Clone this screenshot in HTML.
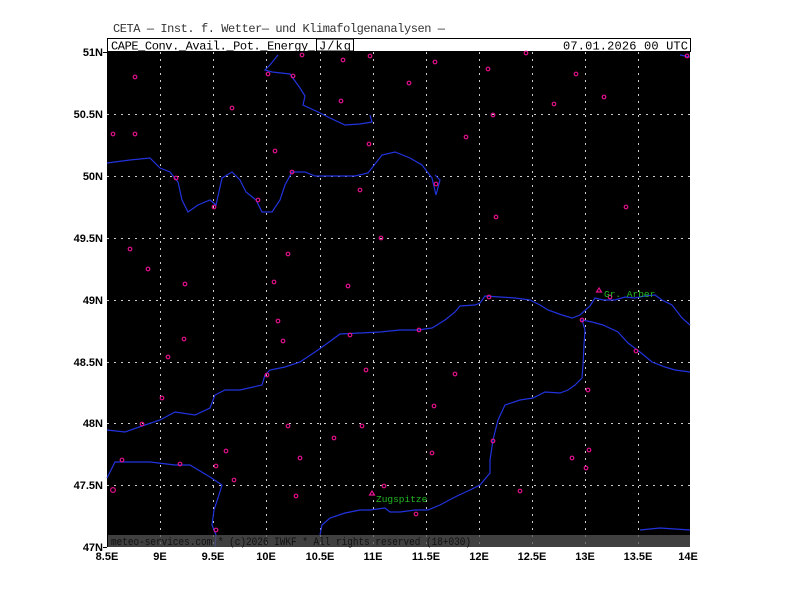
<!DOCTYPE html>
<html><head><meta charset="utf-8"><style>
html,body{margin:0;padding:0;background:#fff;width:800px;height:600px;overflow:hidden}
svg{display:block}
</style></head><body>
<svg width="800" height="600" viewBox="0 0 800 600" xmlns="http://www.w3.org/2000/svg">
<rect width="800" height="600" fill="#fff"/>
<text x="113" y="32" font-size="12" fill="#333" font-family="Liberation Mono, monospace" textLength="332" lengthAdjust="spacing">CETA — Inst. f. Wetter— und Klimafolgenanalysen —</text>
<rect x="107.5" y="38.5" width="583" height="13" fill="#fff" stroke="#000"/>
<text x="111" y="49.5" font-size="12" fill="#000" font-family="Liberation Mono, monospace" textLength="204" lengthAdjust="spacing">CAPE_Conv._Avail._Pot._Energy_</text>
<rect x="316.5" y="39" width="37" height="12" fill="#fff" stroke="#000"/>
<text x="319" y="49.5" font-size="12" fill="#000" font-family="Liberation Mono, monospace" textLength="32" lengthAdjust="spacing">J/kg</text>
<text x="563" y="49.5" font-size="12" fill="#000" font-family="Liberation Mono, monospace" textLength="125" lengthAdjust="spacing">07.01.2026 00 UTC</text>
<rect x="107" y="52" width="583" height="495" fill="#000"/>
<g stroke="#ccc" stroke-width="1" stroke-dasharray="2,5">
<line x1="160.5" y1="52" x2="160.5" y2="547"/><line x1="213.5" y1="52" x2="213.5" y2="547"/><line x1="266.5" y1="52" x2="266.5" y2="547"/><line x1="320.5" y1="52" x2="320.5" y2="547"/><line x1="373.5" y1="52" x2="373.5" y2="547"/><line x1="426.5" y1="52" x2="426.5" y2="547"/><line x1="479.5" y1="52" x2="479.5" y2="547"/><line x1="532.5" y1="52" x2="532.5" y2="547"/><line x1="585.5" y1="52" x2="585.5" y2="547"/><line x1="638.5" y1="52" x2="638.5" y2="547"/>
<line x1="107" y1="114.5" x2="690" y2="114.5"/><line x1="107" y1="176.5" x2="690" y2="176.5"/><line x1="107" y1="238.5" x2="690" y2="238.5"/><line x1="107" y1="300.5" x2="690" y2="300.5"/><line x1="107" y1="362.5" x2="690" y2="362.5"/><line x1="107" y1="423.5" x2="690" y2="423.5"/><line x1="107" y1="485.5" x2="690" y2="485.5"/>
</g>
<g fill="none" stroke="#2233dd" stroke-width="1.2">
<path d="M278,55 L270,65 L265,70 L272,72 L290,74 L300,88 L305,96 L303,105 L318,112 L330,118 L345,125 L360,124 L372,122 L370,115"/>
<path d="M107,163 L130,160 L150,158 L160,168 L170,172 L178,182 L182,200 L188,212 L198,205 L210,200 L216,205 L222,178 L232,172 L240,180 L246,192 L256,200 L262,212 L272,212 L280,200 L285,185 L292,172 L305,172 L315,176 L335,176 L355,176 L368,173 L382,155 L395,152 L410,158 L422,165 L432,178 L436,195 L440,180 L435,175"/>
<path d="M690,325 L682,318 L672,305 L662,300 L655,295 L645,296 L635,298 L625,297 L615,300 L603,300 L595,298 L590,306 L580,315 L572,318 L562,315 L548,310 L540,305 L530,300 L515,298 L500,297 L485,296 L480,303 L475,305 L460,306 L455,312 L445,320 L432,328 L418,330 L400,330 L380,332 L360,333 L340,334 L325,345 L315,352 L300,362 L285,367 L270,370 L265,375 L262,385 L240,390 L225,390 L215,395 L210,408 L195,415 L175,412 L160,420 L145,425 L125,432 L107,430"/>
<path d="M690,372 L675,370 L665,367 L652,362 L640,352 L628,343 L618,332 L603,325 L592,322 L582,320 L585,330 L584,345 L583,365 L582,378 L575,385 L568,390 L560,393 L545,392 L533,398 L520,400 L505,405 L498,420 L493,440 L490,460 L490,473 L480,485 L470,490 L455,497 L440,505 L428,510 L415,510 L400,512 L390,512 L385,508 L370,510 L360,510 L345,513 L330,518 L322,525 L320,535"/>
<path d="M107,478 L115,462 L130,462 L150,462 L175,465 L190,465 L210,477 L222,485 L218,498 L214,510 L212,525 L216,535 L215,547"/>
<path d="M640,530 L660,528 L690,530"/>
<path d="M680,55 L690,57"/>
</g>
<g fill="none" stroke="#e0108a" stroke-width="1.2">
<circle cx="135" cy="77" r="1.8"/><circle cx="113" cy="134" r="1.8"/><circle cx="135" cy="134" r="1.8"/><circle cx="176" cy="178" r="1.8"/><circle cx="130" cy="249" r="1.8"/><circle cx="148" cy="269" r="1.8"/><circle cx="185" cy="284" r="1.8"/><circle cx="168" cy="357" r="1.8"/><circle cx="184" cy="339" r="1.8"/><circle cx="162" cy="398" r="1.8"/><circle cx="142" cy="424" r="1.8"/><circle cx="122" cy="460" r="1.8"/><circle cx="113" cy="490" r="2.4"/><circle cx="180" cy="464" r="1.8"/><circle cx="214" cy="207" r="1.8"/><circle cx="232" cy="108" r="1.8"/><circle cx="258" cy="200" r="1.8"/><circle cx="275" cy="151" r="1.8"/><circle cx="268" cy="74" r="1.8"/><circle cx="293" cy="76" r="1.8"/><circle cx="302" cy="55" r="1.8"/><circle cx="343" cy="60" r="1.8"/><circle cx="370" cy="56" r="1.8"/><circle cx="341" cy="101" r="1.8"/><circle cx="369" cy="144" r="1.8"/><circle cx="360" cy="190" r="1.8"/><circle cx="292" cy="172" r="1.8"/><circle cx="409" cy="83" r="1.8"/><circle cx="435" cy="62" r="1.8"/><circle cx="488" cy="69" r="1.8"/><circle cx="526" cy="53" r="1.8"/><circle cx="576" cy="74" r="1.8"/><circle cx="604" cy="97" r="1.8"/><circle cx="554" cy="104" r="1.8"/><circle cx="493" cy="115" r="1.8"/><circle cx="466" cy="137" r="1.8"/><circle cx="436" cy="184" r="1.8"/><circle cx="496" cy="217" r="1.8"/><circle cx="626" cy="207" r="1.8"/><circle cx="381" cy="238" r="1.8"/><circle cx="288" cy="254" r="1.8"/><circle cx="274" cy="282" r="1.8"/><circle cx="348" cy="286" r="1.8"/><circle cx="278" cy="321" r="1.8"/><circle cx="283" cy="341" r="1.8"/><circle cx="350" cy="335" r="1.8"/><circle cx="419" cy="330" r="1.8"/><circle cx="489" cy="297" r="1.8"/><circle cx="610" cy="297" r="1.8"/><circle cx="582" cy="320" r="1.8"/><circle cx="636" cy="351" r="1.8"/><circle cx="455" cy="374" r="1.8"/><circle cx="366" cy="370" r="1.8"/><circle cx="267" cy="375" r="1.8"/><circle cx="434" cy="406" r="1.8"/><circle cx="362" cy="426" r="1.8"/><circle cx="334" cy="438" r="1.8"/><circle cx="288" cy="426" r="1.8"/><circle cx="300" cy="458" r="1.8"/><circle cx="226" cy="451" r="1.8"/><circle cx="216" cy="466" r="1.8"/><circle cx="234" cy="480" r="1.8"/><circle cx="296" cy="496" r="1.8"/><circle cx="384" cy="486" r="1.8"/><circle cx="416" cy="514" r="1.8"/><circle cx="432" cy="453" r="1.8"/><circle cx="493" cy="441" r="1.8"/><circle cx="520" cy="491" r="1.8"/><circle cx="572" cy="458" r="1.8"/><circle cx="589" cy="450" r="1.8"/><circle cx="586" cy="468" r="1.8"/><circle cx="588" cy="390" r="1.8"/><circle cx="216" cy="530" r="1.8"/><circle cx="687" cy="56" r="1.8"/>
<path d="M372,491 L374.5,495 L369.5,495 Z"/><path d="M599,288 L601.5,292 L596.5,292 Z"/>
</g>
<text x="376" y="502" font-size="9.5" fill="#22bb22" font-family="Liberation Mono, monospace">Zugspitze</text>
<text x="604" y="297" font-size="9.5" fill="#22bb22" font-family="Liberation Mono, monospace">Gr. Arber</text>
<rect x="108" y="535" width="582" height="12" fill="#555" opacity="0.75"/>
<text x="111" y="545" font-size="11" fill="#111" font-family="Liberation Mono, monospace" textLength="360" lengthAdjust="spacingAndGlyphs">meteo-services.com * (c)2026 IWKF * All rights reserved (18+030)</text>
<g font-size="11" font-weight="bold" fill="#000" text-anchor="end" font-family="Liberation Sans, sans-serif">
<text x="103" y="56">51N</text><text x="103" y="118">50.5N</text><text x="103" y="180">50N</text><text x="103" y="242">49.5N</text><text x="103" y="304">49N</text><text x="103" y="366">48.5N</text><text x="103" y="427">48N</text><text x="103" y="489">47.5N</text><text x="103" y="551">47N</text>
</g>
<g stroke="#000"><line x1="103" y1="52.5" x2="107" y2="52.5"/><line x1="103" y1="547.5" x2="107" y2="547.5"/></g>
<g font-size="11" font-weight="bold" fill="#000" text-anchor="middle" font-family="Liberation Sans, sans-serif">
<text x="107" y="560">8.5E</text><text x="160" y="560">9E</text><text x="213" y="560">9.5E</text><text x="266" y="560">10E</text><text x="320" y="560">10.5E</text><text x="373" y="560">11E</text><text x="426" y="560">11.5E</text><text x="479" y="560">12E</text><text x="532" y="560">12.5E</text><text x="585" y="560">13E</text><text x="638" y="560">13.5E</text><text x="688" y="560">14E</text>
</g>
</svg>
</body></html>
